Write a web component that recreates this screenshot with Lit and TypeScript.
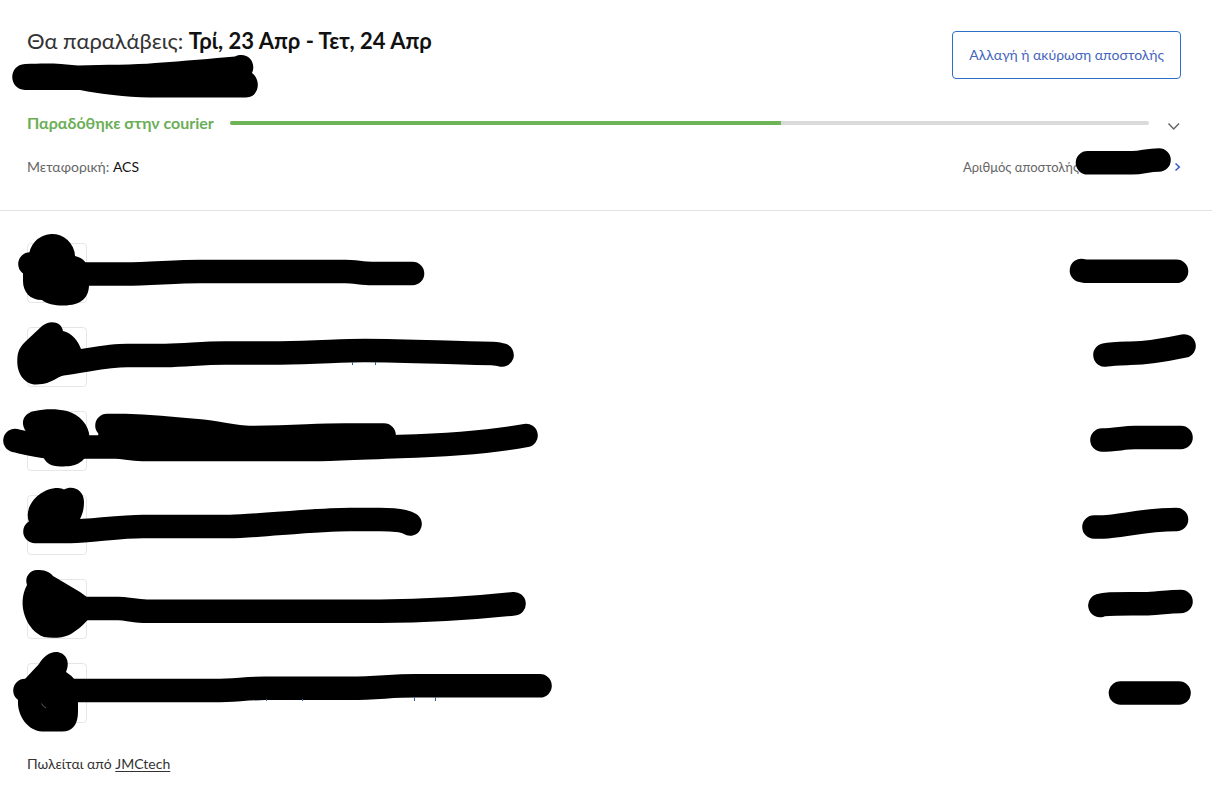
import { LitElement, html, css, svg } from "lit";
import { customElement } from "lit/decorators.js";

interface Mark {
  strokes: string[];
  blob: string;
  ticks?: string;
  nick?: string;
}

interface Item {
  name: Mark;
  price: string;
}

// Marker paths share one drawing space; every row shows its own 84-unit band of it.
const items: Item[] = [
  {
    name: {
      strokes: ["M30 264H34", "M70 274H125C150 274 175 271.5 200 271.5H345C355 271.5 362 273.5 372 273.5H412.5"],
      blob: "M29 258A23 23 0 0 1 75 256C84 258 89 265 89 272V285C89 297 82 305.5 63 305.5C54 305.5 47 304 42 300C30 300 23 292 23 281V272Z",
    },
    price: "M1081.5 270.5L1086 271.3H1176.5",
  },
  {
    name: {
      strokes: ["M60 364C95 359 108 355.5 127 355.5H165C190 355 200 353 225 353H280C320 352.5 340 350.5 365 350.5C410 350.5 450 353 492 353.5Q499 354 502 355"],
      blob: "M42 326C50 319 62 322 63 331C72 333 78 341 81 349V371C57 373 55 384.500 36 384.500C25 384.500 17.300 374 17.300 362C17.300 354 18 349 25 342Z",
      ticks: "M352.500 362V365M375.500 362V365",
    },
    price: "M1105 355C1112 353.500 1119 353.500 1130 353.300C1145 353 1170 349 1184 346",
  },
  {
    name: {
      strokes: [
        "M15 440.500C26 443 34 445.500 50 447H115C125 447 130 449.500 142 449.500H320C350 449 370 447.500 400 446.500C450 445 490 442 526 435.500",
        "M107 425.500H125C150 426.500 175 428.500 200 431C220 433 235 437.500 250 437.500C300 437.500 310 435 345 435H384",
        "M110 436H200",
      ],
      blob: "M25 430C19 418 28 412 35 411C45 409 55 408.500 67 411C80 415 89 425 89.500 437V449C84 464 75 466.500 61 466.500C50 466.500 46 463 42 455Z",
    },
    price: "M1102 440C1115 440 1124 437.500 1135 437.500H1181",
  },
  {
    name: {
      strokes: ["M35 531.500H70C95 530.500 120 526.500 143 526.500H230C260 526 315 519.500 350 519.500H375Q402 519 410 524"],
      blob: "M29 522C23 507 39 488 58 488Q62 488 64 489.500C73 485 84 490 84 502C84 508 83 513 80 519L75 530H35Z",
    },
    price: "M1094 527H1103C1122 526 1146 519.500 1176.500 519.500",
  },
  {
    name: {
      strokes: ["M75 608.500H118C127 608.500 135 611.300 147 611.300H380C430 611 475 608 514 603.800"],
      blob: "M27 585C24 576 31 570 37 570C44 570 49 571 53 576L80 592Q86 596 90 600V617C84 625 75 632 69 635C62 638 52 638.500 44 637C27 631 16 605 27 585Z",
    },
    price: "M1100 605.500C1106 603.500 1112 603.800 1145 603.800C1155 603.500 1170 601.500 1181 601.500",
  },
  {
    name: {
      strokes: ["M25 690.500H215C235 690.500 245 688.300 265 688.300H350C380 688 390 685.800 415 685.800H540"],
      blob: "M25 679L39 664C43 657 49 652 56 652C65 652 71 661 66 672Q71 675 75 680L78 700V712C78 724 73 731.500 62 731.500H42C29 731 17 717 18 700Z",
      ticks: "M266.500 699V701M302.500 699V701M414.500 697V701M435.500 697V701",
      nick: "M41.500 703.500Q43 706.500 46 708",
    },
    price: "M1120.500 693H1179",
  },
];

@customElement("app-root")
export class AppRoot extends LitElement {
  static styles = css`
    :host {
      display: block;
      background: #fff;
      color: #111;
      font-family: Lato, "Open Sans", sans-serif;
      font-size: 14px;
      line-height: 20px;
    }
    header {
      padding: 31px 31px 32px 27px;
      border-bottom: 1px solid #e3e3e3;
    }
    .top {
      display: flex;
      justify-content: space-between;
      align-items: flex-start;
    }
    h1 {
      margin: 0;
      font-size: 22px;
      line-height: 20px;
      font-weight: 400;
      color: #333;
    }
    h1 strong {
      color: #111;
      font-weight: 700;
    }
    .address {
      position: relative;
      height: 28px;
    }
    .mark {
      position: absolute;
      overflow: visible;
      fill: #000;
      pointer-events: none;
    }
    .line {
      fill: none;
      stroke: #000;
      stroke-width: 23.6px;
      stroke-linecap: round;
      stroke-linejoin: round;
    }
    .ticks {
      fill: none;
      stroke: #35618c;
      stroke-width: 1px;
    }
    .nick {
      fill: none;
      stroke: #999;
      stroke-width: 0.6px;
    }
    .address .mark {
      left: -27px;
      top: 0;
    }
    .change {
      height: 48px;
      padding: 0 16px;
      border: 1px solid #2f6fc6;
      border-radius: 4px;
      background: #fff;
      color: #4565bd;
      font: inherit;
      cursor: pointer;
    }
    .progress {
      display: flex;
      align-items: center;
      gap: 16px;
      margin-top: 34px;
    }
    .status {
      color: #6bae58;
      font-size: 16px;
      font-weight: 700;
    }
    .track {
      flex: 1;
      height: 4px;
      border-radius: 2px;
      background: #dadada;
      overflow: hidden;
    }
    .fill {
      height: 100%;
      background: #6db456;
    }
    .toggle {
      display: flex;
      padding: 6px 0 0;
      border: 0;
      background: none;
      cursor: pointer;
    }
    .icon {
      fill: none;
      stroke: #666;
      stroke-width: 1.5px;
    }
    .meta {
      display: flex;
      justify-content: space-between;
      margin-top: 24px;
      padding-bottom: 1px;
      color: #666;
    }
    .meta b {
      font-weight: 400;
      color: #111;
    }
    .number {
      position: relative;
      display: flex;
      align-items: center;
      justify-content: space-between;
      width: 218px;
      font-size: 13px;
      color: inherit;
      text-decoration: none;
    }
    .number .mark {
      right: 10px;
      top: -9px;
    }
    .number .icon {
      stroke: #3c5fc4;
      stroke-width: 1.6px;
    }
    main {
      padding: 32px 31px 24px 27px;
    }
    ul {
      display: grid;
      gap: 24px;
      margin: 0;
      padding: 0;
      list-style: none;
    }
    li {
      position: relative;
    }
    .thumb {
      box-sizing: border-box;
      width: 60px;
      height: 60px;
      border: 1px solid #e6e6e6;
      border-radius: 4px;
    }
    .name {
      left: -27px;
      top: -12px;
    }
    .price {
      right: -31px;
      top: -12px;
    }
    .seller {
      margin: 31px 0 0;
      color: #333;
    }
    .seller a {
      color: inherit;
      text-underline-offset: 2px;
    }
  `;

  render() {
    return html`
      <header>
        <div class="top">
          <div>
            <h1>Θα παραλάβεις: <strong>Τρί, 23 Απρ - Τετ, 24 Απρ</strong></h1>
            <div class="address">
              <svg class="mark" width="270" height="48" viewBox="0 51 270 48" aria-hidden="true">
                <path d="M25 64C45 63 58 63 78 65.500C105 64.500 135 65 155 63C185 61 212 58.500 235 56.500C247 51 257 62 252 73C261 79 260 97 246 97.500H150C125 97 100 94 80 90H25C8 89 8 65 25 64Z" />
              </svg>
            </div>
          </div>
          <button class="change" type="button">Αλλαγή ή ακύρωση αποστολής</button>
        </div>
        <div class="progress">
          <span class="status" id="status">Παραδόθηκε στην courier</span>
          <div class="track" role="progressbar" aria-labelledby="status" aria-valuenow="60" aria-valuemin="0" aria-valuemax="100">
            <div class="fill" style="width:60%"></div>
          </div>
          <button class="toggle" type="button" aria-label="Λεπτομέρειες">
            <svg class="icon" width="16" height="12" viewBox="0 0 16 12"><path d="M3.500 3.500L8.700 9L14 3.500" /></svg>
          </button>
        </div>
        <div class="meta">
          <span>Μεταφορική: <b>ACS</b></span>
          <a class="number" href="#">
            Αριθμός αποστολής
            <svg class="icon" width="7" height="10" viewBox="0 0 7 10"><path d="M1.500 1.500L5.300 5L1.500 8.500" /></svg>
            <svg class="mark" width="96" height="28" viewBox="1075 148 96 28" aria-hidden="true">
              <path class="line" d="M1087.500 162.800H1132C1143 162.800 1147 160 1159 160" />
            </svg>
          </a>
        </div>
      </header>
      <main>
        <ul>
          ${items.map((item, i) => {
            const y = 231 + i * 84;
            const { blob, strokes, ticks, nick } = item.name;
            return html`
              <li>
                <div class="thumb"></div>
                <svg class="mark name" width="580" height="84" viewBox="0 ${y} 580 84" aria-hidden="true">
                  <path d=${blob} />
                  ${strokes.map((d) => svg`<path class="line" d=${d} />`)}
                  ${ticks ? svg`<path class="ticks" d=${ticks} />` : null}
                  ${nick ? svg`<path class="nick" d=${nick} />` : null}
                </svg>
                <svg class="mark price" width="160" height="84" viewBox="1052 ${y} 160 84" aria-hidden="true">
                  <path class="line" d=${item.price} />
                </svg>
              </li>
            `;
          })}
        </ul>
        <p class="seller">Πωλείται από <a href="#">JMCtech</a></p>
      </main>
    `;
  }
}
